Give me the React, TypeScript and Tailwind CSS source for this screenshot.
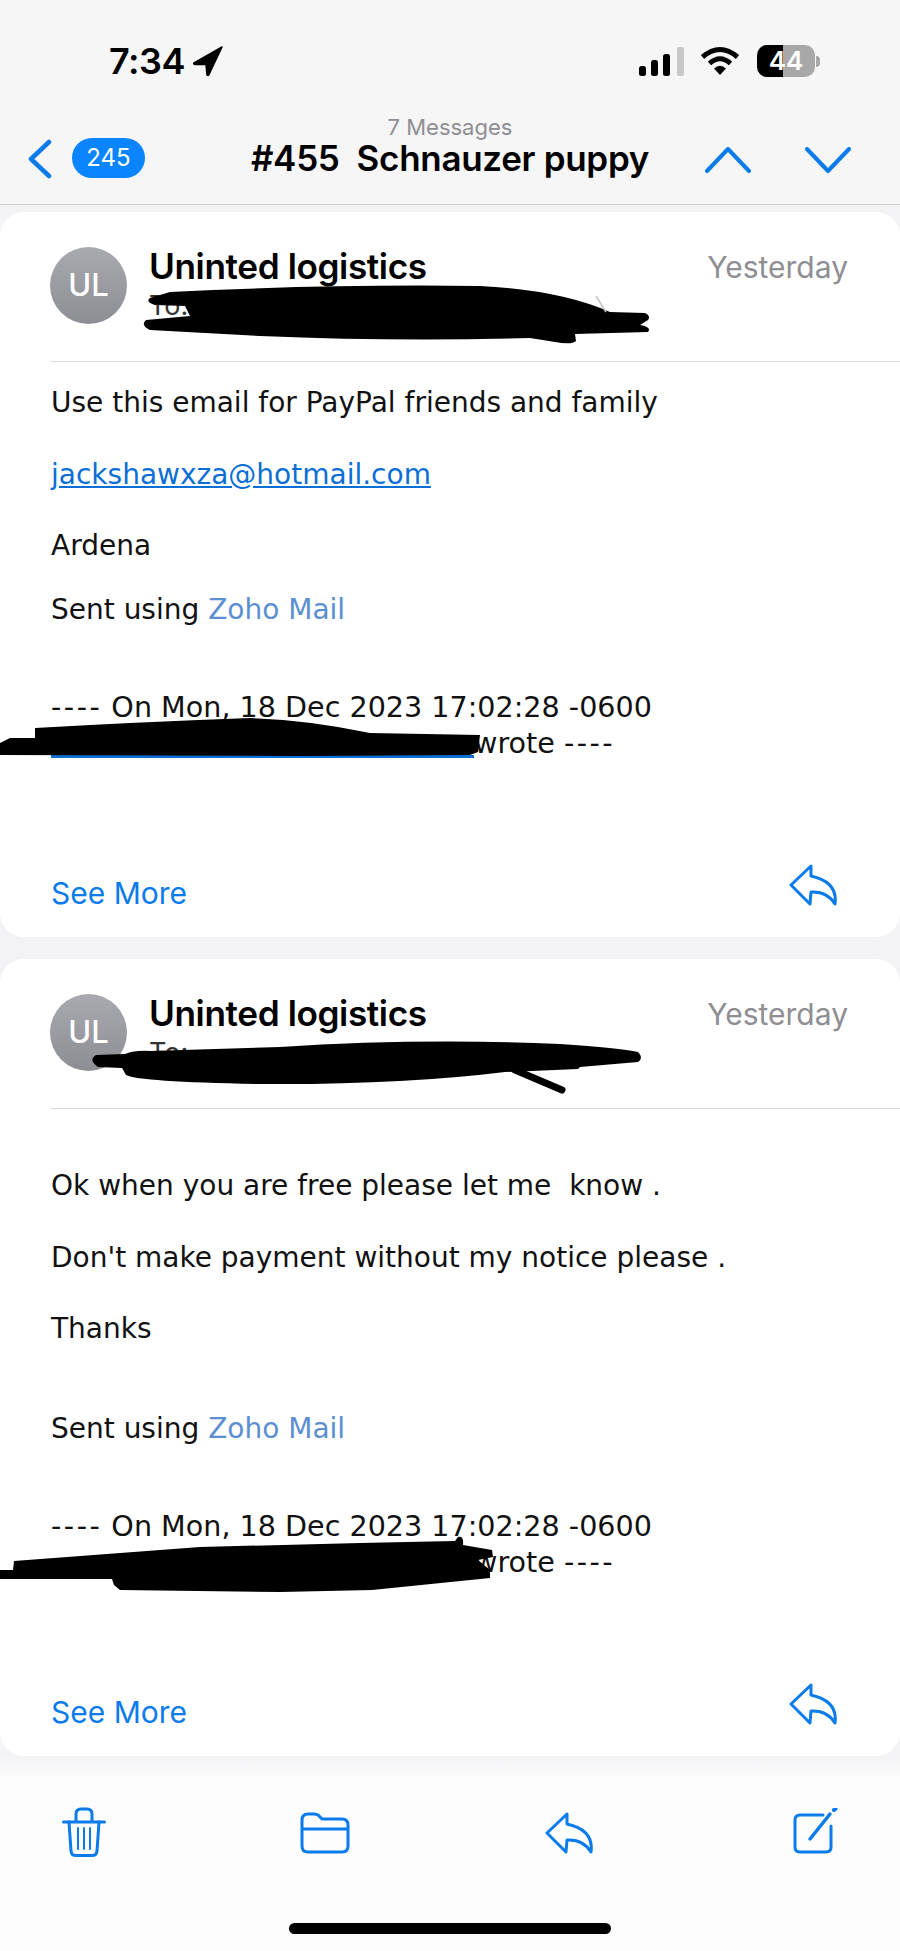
import type { ReactNode } from 'react';

const SANS = 'font-["Inter","Liberation_Sans",sans-serif]';
const BODY = 'font-["DejaVu_Sans","Liberation_Sans",sans-serif]';

function ReplyIcon({ className }: { className: string }) {
  return (
    <svg viewBox="0 0 48 42" fill="none" stroke="currentColor" strokeWidth="3" strokeLinejoin="round" className={className}>
      <path d="M22 2 L2 21 L21 40 L22 28 Q38 27 46 40 Q49 18 22 12 Z" />
    </svg>
  );
}

function TrashIcon() {
  return (
    <svg viewBox="0 0 44 50" fill="none" stroke="currentColor" strokeWidth="3" strokeLinecap="round" className="w-[44px] h-[50px]">
      <path d="M1.5 15 H42.5" />
      <path d="M14 14 V7 Q14 2 19 2 H25 Q30 2 30 7 V14" />
      <path d="M7 15 L9 44 Q9.5 48.5 14 48.5 H30 Q34.5 48.5 35 44 L37 15" />
      <path d="M16 21 V42 M22 21 V42 M28 21 V42" strokeWidth="2" />
    </svg>
  );
}

function FolderIcon() {
  return (
    <svg viewBox="0 0 50 42" fill="none" stroke="currentColor" strokeWidth="3" strokeLinejoin="round" className="w-[50px] h-[42px]">
      <path d="M2 8 Q2 2 8 2 H14 Q18 2 20 5 L22 7 H42 Q48 7 48 13 V34 Q48 40 42 40 H8 Q2 40 2 34 Z" />
      <path d="M2 17 H48" />
    </svg>
  );
}

function ComposeIcon() {
  return (
    <svg viewBox="0 0 46 46" fill="none" stroke="currentColor" strokeWidth="3" strokeLinecap="round" className="w-[46px] h-[46px]">
      <path d="M30 7 H7 Q2 7 2 12 V39 Q2 44 7 44 H33 Q38 44 38 39 V18" />
      <path d="M17 31 L37 6" strokeWidth="3.5" />
      <path d="M41 2 L42.5 0.5" strokeWidth="4" />
    </svg>
  );
}

function Chevron({ d, className }: { d: string; className: string }) {
  return (
    <svg viewBox="0 0 46 26" fill="none" stroke="#0a7bea" strokeWidth="4" strokeLinecap="round" strokeLinejoin="round" className={className}>
      <path d={d} />
    </svg>
  );
}

function StatusBar() {
  return (
    <div className="flex items-center h-[122px] pl-[109px] pr-[80px]">
      <span className={`${SANS} text-[36px] font-semibold text-black leading-none tracking-[-0.5px]`}>7:34</span>
      <svg viewBox="0 0 30 30" className="w-[30px] h-[30px] ml-[8px]">
        <path d="M29 1 L1 17 Q0 18 2 18.5 L13 18.5 L14 29 Q15 30 16 28.5 Z" fill="#000" stroke="#000" strokeWidth="1.5" strokeLinejoin="round" />
      </svg>
      <div className="flex-1" />
      <svg viewBox="0 0 46 30" className="w-[46px] h-[30px]">
        <rect x="0" y="20" width="7" height="10" rx="2.5" fill="#000" />
        <rect x="12" y="14" width="7" height="16" rx="2.5" fill="#000" />
        <rect x="24" y="8" width="7" height="22" rx="2.5" fill="#000" />
        <rect x="38" y="1" width="7" height="29" rx="2" fill="#c8c8ca" />
      </svg>
      <svg viewBox="0 0 40 30" className="w-[40px] h-[30px] ml-[15px]" fill="none" stroke="#000" strokeWidth="5">
        <path d="M2.5 11 Q20 -4 37.5 11" />
        <path d="M9.5 17.5 Q20 8 30.5 17.5" />
        <path d="M20 29 L14 22.5 Q20 17 26 22.5 Z" fill="#000" stroke="none" />
      </svg>
      <div className="flex items-center ml-[17px]">
        <div className={`${SANS} flex items-center justify-center w-[58px] h-[32px] rounded-[10px] bg-[linear-gradient(90deg,#000_45%,#a8a8a8_45%)] text-white text-[26px] font-semibold leading-none`}>
          44
        </div>
        <div className="w-[4px] h-[11px] ml-[1px] rounded-r-full bg-[#a8a8a8]" />
      </div>
    </div>
  );
}

function Header() {
  return (
    <header className="h-[205px] bg-[#f6f6f7] border-b border-[#cfcfd1]">
      <StatusBar />
      <div className="flex items-start pl-[28px] pr-[49px]">
        <svg viewBox="0 0 24 40" fill="none" stroke="#0a7bea" strokeWidth="4.5" strokeLinecap="round" strokeLinejoin="round" className="w-[24px] h-[40px] mt-[17px]">
          <path d="M21 3 L3 20 L21 37" />
        </svg>
        <div className={`${SANS} flex items-center justify-center w-[73px] h-[40px] mt-[16px] ml-[20px] rounded-full bg-[#0a84ff] text-white text-[24px] leading-none`}>
          245
        </div>
        <div className={`${SANS} flex flex-col items-center w-[420px] ml-[95px] -mt-[7px] mr-[45px]`}>
          <span className="text-[22px] leading-[24px] text-[#8e8e93]">7 Messages</span>
          <span className="text-[35px] font-semibold leading-[36px] mt-[1px] text-black whitespace-pre tracking-[-0.3px]">#455  Schnauzer puppy</span>
        </div>
        <Chevron d="M2 24 L23 2 L44 24" className="w-[46px] h-[26px] mt-[25px]" />
        <Chevron d="M2 2 L23 24 L44 2" className="w-[46px] h-[26px] mt-[25px] ml-[54px]" />
      </div>
    </header>
  );
}

function Line({ children, mt }: { children: ReactNode; mt: string }) {
  return <p className={`${mt} leading-[36px] text-[28px] text-[#111] whitespace-pre`}>{children}</p>;
}

function QuoteLine({ children }: { children: ReactNode }) {
  return <p className="leading-[36px] text-[28.6px] text-[#111] whitespace-pre">{children}</p>;
}

function Dashes() {
  return <span className="tracking-[2.5px]">----</span>;
}

function CardTop() {
  return (
    <div className="flex items-start h-[150px] ml-[50px] border-b border-[#dcdcde]">
      <div className={`${SANS} flex items-center justify-center w-[77px] h-[77px] mt-[35px] rounded-full bg-[linear-gradient(180deg,#a9a9b0,#8d8d94)] text-white text-[31px] font-medium`}>
        UL
      </div>
      <div className="flex-1 ml-[22px] mt-[32px]">
        <div className={`${SANS} text-[35.2px] leading-[44px] font-semibold text-black tracking-[-0.4px]`}>Uninted logistics</div>
        <div className={`${SANS} text-[27px] leading-[36px] text-[#333]`}>To:</div>
      </div>
      <div className={`${SANS} text-[30px] leading-[40px] mt-[35px] mr-[52px] text-[#8e8e93]`}>Yesterday</div>
    </div>
  );
}

function CardFoot() {
  return (
    <div className="mt-auto flex items-end justify-between pl-[51px] pr-[63px] pb-[24px]">
      <span className={`${SANS} text-[30px] leading-[40px] text-[#0a7bea]`}>See More</span>
      <ReplyIcon className="w-[48px] h-[42px] text-[#0a7bea] mb-[7px]" />
    </div>
  );
}

function Scribble({ top, height, children }: { top: number; height: number; children: ReactNode }) {
  return (
    <svg viewBox={`0 ${top} 900 ${height}`} className="absolute left-0 top-0 w-[900px] pointer-events-none" style={{ height }}>
      {children}
    </svg>
  );
}

export default function App() {
  return (
    <div className={`${BODY} relative w-[900px] h-[1951px] overflow-hidden bg-[#fdfdfe]`}>
      <Header />
      <div className="bg-[#f3f3f5] pt-[7px]">
        {/* first message */}
        <section className="relative flex flex-col h-[725px] rounded-[24px] bg-white overflow-hidden">
          <CardTop />
          <div className="pl-[51px] pt-[23px]">
            <Line mt="mt-[0px]">Use this email for PayPal friends and family</Line>
            <Line mt="mt-[36px]"><span className="text-[#0b6fd6] underline">jackshawxza@hotmail.com</span></Line>
            <Line mt="mt-[35px]">Ardena</Line>
            <Line mt="mt-[28px]">Sent using <span className="text-[#5b8fd2]">Zoho Mail</span></Line>
            <div className="mt-[61px]">
              <QuoteLine><Dashes /> On Mon, 18 Dec 2023 17:02:28 -0600</QuoteLine>
              <QuoteLine><span className="inline-block w-[423px] h-[26px] -mb-[5px] border-b-[3px] border-[#0b6fd6] align-baseline" />wrote <Dashes /></QuoteLine>
            </div>
          </div>
          <CardFoot />
          <Scribble top={212} height={725}>
            <path d="M170 292 Q330 284 480 286 Q560 290 610 312 L645 313 Q651 316 648 320 L640 325 Q652 327 648 332 L575 334 L576 341 Q572 345 555 342 L530 338 Q400 342 260 336 L150 330 Q140 325 146 320 L190 316 L185 306 L155 305 Q145 302 150 298 Z" fill="#000" />
            <path d="M596 296 L606 312" stroke="#c4c4c6" strokeWidth="1.5" />
            <path d="M35 728 Q140 722 250 718 Q310 720 370 733 L480 735 L478 752 L470 755 L300 756 L0 755 L0 743 L10 738 L35 738 Z" fill="#000" />
          </Scribble>
        </section>

        {/* second message */}
        <section className="relative flex flex-col h-[797px] mt-[22px] rounded-[24px] bg-white overflow-hidden">
          <CardTop />
          <div className="pl-[51px] pt-[59px]">
            <Line mt="mt-[0px]">Ok when you are free please let me  know .</Line>
            <Line mt="mt-[36px]">Don't make payment without my notice please .</Line>
            <Line mt="mt-[35px]">Thanks</Line>
            <Line mt="mt-[64px]">Sent using <span className="text-[#5b8fd2]">Zoho Mail</span></Line>
            <div className="mt-[61px]">
              <QuoteLine><Dashes /> On Mon, 18 Dec 2023 17:02:28 -0600</QuoteLine>
              <QuoteLine><span className="inline-block w-[423px]" />wrote <Dashes /></QuoteLine>
            </div>
          </div>
          <CardFoot />
          <Scribble top={959} height={797}>
            <path d="M280 1047 Q420 1038 560 1044 Q620 1048 638 1052 Q644 1058 638 1062 L580 1067 L578 1069 L505 1072 Q400 1085 260 1084 Q140 1082 126 1075 L122 1068 L98 1067 Q88 1060 96 1055 L125 1054 Q135 1050 150 1051 Z" fill="#000" />
            <path d="M515 1070 L562 1090" stroke="#000" strokeWidth="7" strokeLinecap="round" />
            <path d="M0 1570 L13 1570 L14 1561 L200 1547 L360 1543 L455 1541 L458 1537 Q464 1535 463 1545 L492 1550 L493 1557 L478 1560 L490 1570 L490 1578 L372 1590 L280 1592 L120 1590 L114 1585 L112 1579 L0 1579 Z" fill="#000" />
          </Scribble>
        </section>
      </div>

      {/* toolbar */}
      <div className="absolute left-0 right-0 top-[1756px] h-[24px] bg-[linear-gradient(180deg,#f3f3f5,#fdfdfe)]" />
      <footer className="flex items-end pt-[51px] pl-[62px] text-[#0a7bea]">
        <TrashIcon />
        <div className="mb-[3px] ml-[194px]"><FolderIcon /></div>
        <div className="mb-[3px] ml-[195px]"><ReplyIcon className="w-[48px] h-[42px]" /></div>
        <div className="mb-[3px] ml-[200px]"><ComposeIcon /></div>
      </footer>
      <div className="w-[322px] h-[11px] mx-auto mt-[66px] rounded-full bg-black" />
    </div>
  );
}
